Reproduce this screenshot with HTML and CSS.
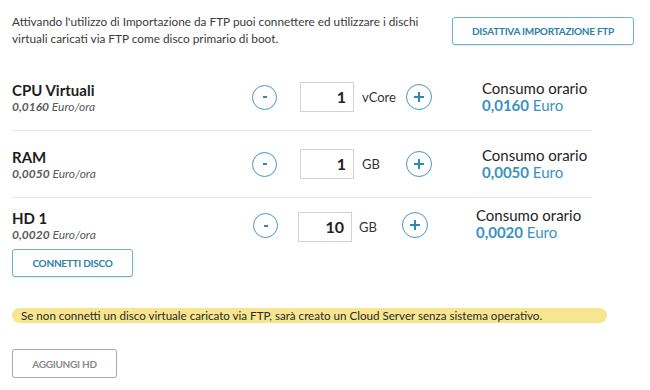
FILE: index.html
```html
<!DOCTYPE html>
<html>

<head>
  <title>Importazione FTP</title>
  <link rel="stylesheet" href="styles.css">
</head>

<body>
  <div class="intro">
    <p class="introText">Attivando l'utilizzo di Importazione da FTP puoi connettere ed utilizzare i dischi<br>
      virtuali caricati via FTP come disco primario di boot.</p>
    <button class="btn btnBlue btnFtp">DISATTIVA IMPORTAZIONE FTP</button>
  </div>

  <div class="resources">
    <div class="row">
      <div class="name">
        <div class="title">CPU Virtuali</div>
        <div class="price"><b>0,0160</b> Euro/ora</div>
      </div>
      <button class="step"><svg width="10" height="10" viewBox="0 0 10 10"><line x1="3" y1="5" x2="7" y2="5" /></svg></button>
      <div class="qty">1</div>
      <div class="unit">vCore</div>
      <button class="step plus"><svg width="12" height="12" viewBox="0 0 12 12"><line x1="1" y1="6" x2="11" y2="6" /><line x1="6" y1="1" x2="6" y2="11" /></svg></button>
      <div class="cost">
        <div class="costLabel">Consumo orario</div>
        <div class="costValue"><b>0,0160</b> Euro</div>
      </div>
    </div>

    <div class="row">
      <div class="name">
        <div class="title">RAM</div>
        <div class="price"><b>0,0050</b> Euro/ora</div>
      </div>
      <button class="step"><svg width="10" height="10" viewBox="0 0 10 10"><line x1="3" y1="5" x2="7" y2="5" /></svg></button>
      <div class="qty">1</div>
      <div class="unit">GB</div>
      <button class="step plus"><svg width="12" height="12" viewBox="0 0 12 12"><line x1="1" y1="6" x2="11" y2="6" /><line x1="6" y1="1" x2="6" y2="11" /></svg></button>
      <div class="cost">
        <div class="costLabel">Consumo orario</div>
        <div class="costValue"><b>0,0050</b> Euro</div>
      </div>
    </div>

    <div class="disk">
      <div class="row rowHd">
        <div class="name">
          <div class="title">HD 1</div>
          <div class="price"><b>0,0020</b> Euro/ora</div>
        </div>
        <button class="step"><svg width="10" height="10" viewBox="0 0 10 10"><line x1="3" y1="5" x2="7" y2="5" /></svg></button>
        <div class="qty">10</div>
        <div class="unit">GB</div>
        <button class="step plus"><svg width="12" height="12" viewBox="0 0 12 12"><line x1="1" y1="6" x2="11" y2="6" /><line x1="6" y1="1" x2="6" y2="11" /></svg></button>
        <div class="cost">
          <div class="costLabel">Consumo orario</div>
          <div class="costValue"><b>0,0020</b> Euro</div>
        </div>
      </div>
      <button class="btn btnBlue btnDisk">CONNETTI DISCO</button>
    </div>
  </div>

  <div class="notice">Se non connetti un disco virtuale caricato via FTP, sarà creato un Cloud Server senza sistema operativo.</div>

  <button class="btn btnGray">AGGIUNGI HD</button>
</body>

</html>
```

FILE: styles.css
```css
body {
  margin: 0;
  padding: 0 12px;
  font-family: 'Lato', 'Open Sans', sans-serif;
  color: #333333;
  background-color: #ffffff;
}

.intro {
  display: flex;
  align-items: flex-start;
  justify-content: space-between;
  padding-top: 13px;
  padding-right: 4px;
}

.introText {
  margin: 0;
  font-size: 11.8px;
  line-height: 17px;
  color: #3a3a3a;
}

.btn {
  font-family: 'Lato', 'Open Sans', sans-serif;
  font-size: 10px;
  font-weight: 700;
  letter-spacing: -0.25px;
  background-color: #ffffff;
  border-radius: 3px;
  cursor: pointer;
  padding: 0;
  display: block;
}

.btnBlue {
  color: #2d7fab;
  border: 1px solid #6eb0d1;
  box-shadow: 0 1px 1px rgba(0, 0, 0, 0.08);
}

.btnFtp {
  width: 182px;
  height: 28px;
  margin-top: 4px;
}

.resources {
  width: 580px;
  margin-top: 17px;
}

.row {
  display: flex;
  align-items: center;
  box-sizing: border-box;
  height: 67px;
  border-bottom: 1px solid #e9e9e9;
}

.name {
  width: 240px;
}

.title {
  font-size: 15px;
  font-weight: 700;
  line-height: 19px;
  color: #1e1e1e;
}

.price {
  font-size: 12px;
  font-style: italic;
  line-height: 14px;
  color: #5a5a5a;
}

.step {
  width: 25px;
  height: 25px;
  border-radius: 50%;
  border: 1.5px solid #4797c1;
  background-color: #ffffff;
  padding: 0;
  display: flex;
  align-items: center;
  justify-content: center;
  cursor: pointer;
}

.step svg {
  stroke: #2f88b8;
  stroke-width: 2;
}

.plus {
  width: 26px;
  height: 26px;
}

.qty {
  box-sizing: border-box;
  width: 54px;
  height: 30px;
  margin-left: 23px;
  border: 1px solid #d2d2d2;
  text-align: right;
  padding-right: 7px;
  font-size: 16px;
  font-weight: 700;
  line-height: 28px;
  color: #222222;
}

.unit {
  width: 36px;
  margin-left: 8px;
  font-size: 13px;
  color: #333333;
}

.plus {
  margin-left: 8px;
}

.cost {
  margin-left: 50px;
}

.costLabel {
  font-size: 15px;
  line-height: 17px;
  color: #1e1e1e;
}

.costValue {
  font-size: 15px;
  line-height: 17px;
  color: #3a92c4;
}

.disk .rowHd {
  height: auto;
  border-bottom: none;
  padding-top: 11px;
  align-items: flex-start;
}

.rowHd .name {
  width: 241px;
}

.rowHd .step {
  margin-top: 4px;
}

.rowHd .qty {
  margin-top: 3px;
  margin-left: 20px;
}

.rowHd .unit {
  margin-top: 10px;
  margin-left: 7px;
}

.rowHd .plus {
  margin-top: 3px;
  margin-left: 7px;
}

.rowHd .cost {
  margin-top: -2px;
  margin-left: 48px;
}

.btnDisk {
  width: 121px;
  height: 28px;
  margin-top: 7px;
}

.notice {
  box-sizing: border-box;
  width: 595px;
  height: 15px;
  margin-top: 31px;
  padding-left: 9px;
  border-radius: 8px;
  background-color: #f7e68f;
  font-size: 11.6px;
  line-height: 15px;
  color: #2a2a2a;
}

.btnGray {
  width: 105px;
  height: 29px;
  margin-top: 26px;
  color: #8a8a8a;
  border: 1px solid #a9a9a9;
  box-shadow: 0 1px 1px rgba(0, 0, 0, 0.08);
}
```
